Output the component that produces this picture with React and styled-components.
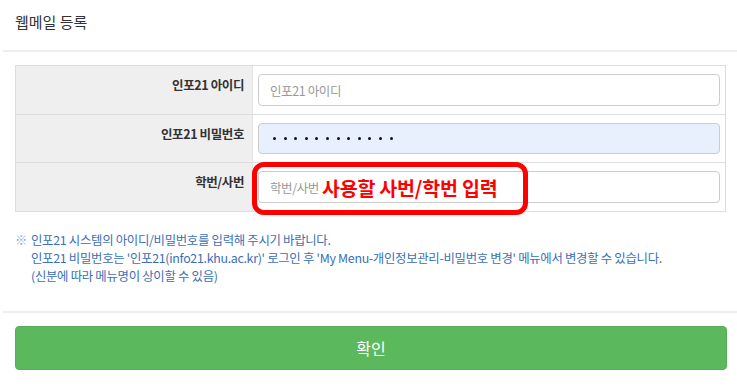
import React from "react";
import styled, { createGlobalStyle } from "styled-components";

const Global = createGlobalStyle`
  html, body { margin: 0; padding: 0; background: #fff; }
  body { font-family: "Noto Sans CJK KR", "Noto Sans", sans-serif; color: #333; }
  * { box-sizing: border-box; }
`;

const Page = styled.div`
  width: 737px;
  height: 389px;
  padding: 0 0 0 3px;
  overflow: hidden;
`;

const Header = styled.div`
  height: 52px;
  padding: 11px 0 0 12px;
  font-size: 15px;
  color: #333;
  border-bottom: 2px solid #eeeeee;
`;

const Body = styled.div`
  padding: 13px 8px 0 12px;
`;

const FormTable = styled.div`
  display: grid;
  grid-template-columns: 236px 1fr;
  width: 711px;
  border: 1px solid #dddddd;
`;

const Label = styled.div`
  background: #efefef;
  border-top: ${(p) => (p.$first ? "none" : "1px solid #dddddd")};
  text-align: right;
  padding: 9px 8px 0 0;
  font-size: 12.5px;
  font-weight: bold;
  letter-spacing: -0.4px;
  color: #333;
  line-height: 20px;
`;

const Cell = styled.div`
  position: relative;
  border-top: ${(p) => (p.$first ? "none" : "1px solid #dddddd")};
  border-left: 1px solid #e4e4e4;
  padding: 8px 5px 8px 5px;
`;

const Input = styled.div`
  height: ${(p) => p.$h || 32}px;
  border: 1px solid #cccccc;
  border-radius: 4px;
  background: ${(p) => (p.$autofill ? "#e8f0fe" : "#fff")};
  padding: 0 11px;
  display: flex;
  align-items: center;
  font-size: 12.5px;
  letter-spacing: -0.4px;
  color: #999;
`;

const Dots = styled.span`
  display: flex;
  gap: 7.6px;
  padding-left: 3px;
`;

const Dot = styled.span`
  width: 3px;
  height: 3px;
  border-radius: 50%;
  background: #111;
`;

const Annotation = styled.div`
  position: absolute;
  left: -1px;
  top: -1px;
  width: 276px;
  height: 53px;
  border: 5px solid #ff0000;
  border-radius: 12px;
  pointer-events: none;
`;

const RedText = styled.span`
  color: #ff0000;
  font-weight: bold;
  font-size: 19.5px;
  letter-spacing: -0.2px;
  margin-left: 3px;
`;

const Notes = styled.div`
  padding: 19px 0 0 0;
  font-size: 12.4px;
  line-height: 18px;
  color: #3b6fb6;
  letter-spacing: -0.3px;
  height: 99px;
`;

const NoteLine = styled.div`
  display: flex;
  white-space: nowrap;
`;

const Mark = styled.span`
  display: inline-block;
  width: 16px;
  color: #8aa7d0;
`;

const Divider = styled.div`
  height: 2px;
  background: #eeeeee;
`;

const Footer = styled.div`
  padding: 13px 7px 0 12px;
`;

const Button = styled.button`
  width: 712px;
  height: 44px;
  background: #5cb85c;
  border: 1px solid #55ad55;
  border-radius: 4px;
  color: #fff;
  font-family: "Noto Sans CJK KR", sans-serif;
  font-size: 16px;
  cursor: pointer;
`;

export default function App() {
  return (
    <Page>
      <Global />
      <Header>웹메일 등록</Header>
      <Body>
        <FormTable>
          <Label $first>인포21 아이디</Label>
          <Cell $first>
            <Input>인포21 아이디</Input>
          </Cell>
          <Label>인포21 비밀번호</Label>
          <Cell>
            <Input $autofill $h={31}>
              <Dots>
                {Array.from({ length: 12 }).map((_, i) => (
                  <Dot key={i} />
                ))}
              </Dots>
            </Input>
          </Cell>
          <Label>학번/사번</Label>
          <Cell>
            <Input>
              학번/사번<RedText>사용할 사번/학번 입력</RedText>
            </Input>
            <Annotation />
          </Cell>
        </FormTable>
        <Notes>
          <NoteLine>
            <Mark>※</Mark>인포21 시스템의 아이디/비밀번호를 입력해 주시기 바랍니다.
          </NoteLine>
          <NoteLine>
            <Mark />
            인포21 비밀번호는 '인포21(info21.khu.ac.kr)' 로그인 후 'My Menu-개인정보관리-비밀번호 변경' 메뉴에서 변경할 수 있습니다.
          </NoteLine>
          <NoteLine>
            <Mark />
            (신분에 따라 메뉴명이 상이할 수 있음)
          </NoteLine>
        </Notes>
      </Body>
      <Divider />
      <Footer>
        <Button>확인</Button>
      </Footer>
    </Page>
  );
}
